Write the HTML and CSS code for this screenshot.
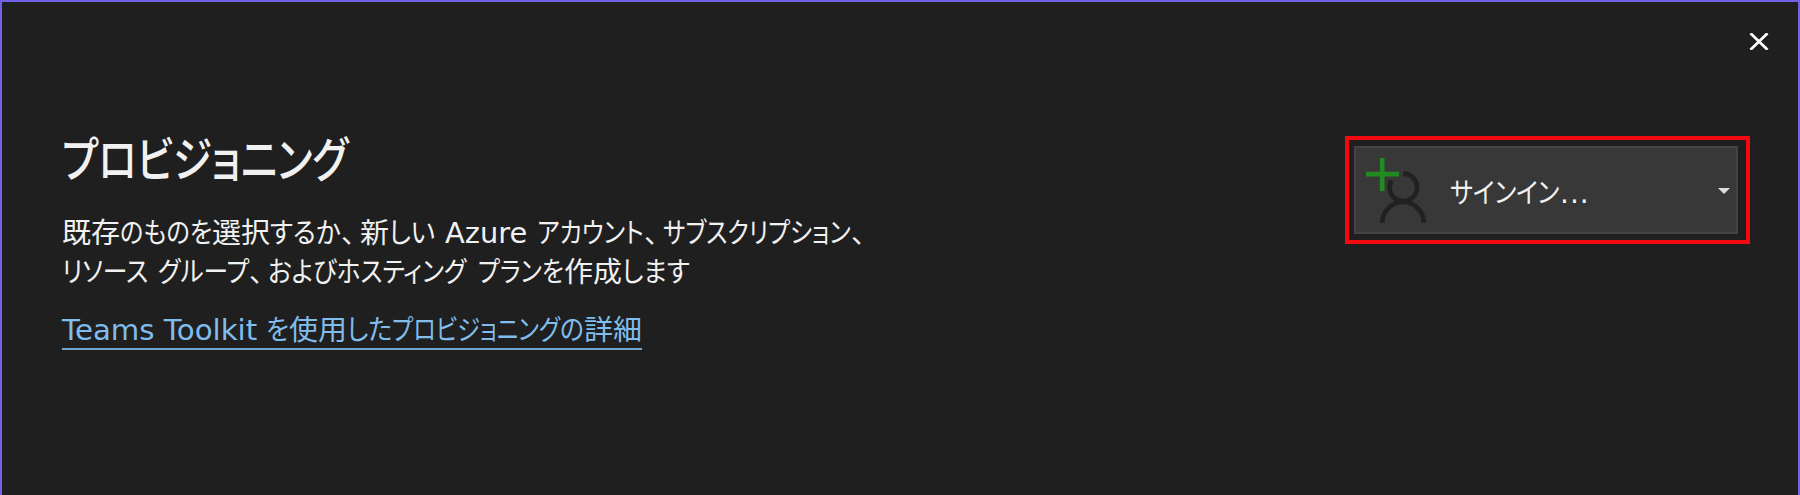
FILE: index.html
```
<!DOCTYPE html>
<html lang="ja">
<head>
<meta charset="utf-8">
<title>プロビジョニング</title>
<link rel="stylesheet" href="styles.css">
</head>
<body>
<main class="dialog">
  <section class="info">
    <h1 class="title line"><span class="run" style="width:286px"><span>プロビジョニング</span></span></h1>
    <div class="description">
      <p class="line"><span class="run" style="width:58px"><span>既存</span></span><span class="run" style="width:92px"><span>のものを</span></span><span class="run" style="width:58px"><span>選択</span></span><span class="run" style="width:71px"><span>するか</span></span><span class="comma">、</span><span class="run" style="width:29px"><span>新</span></span><span class="run" style="width:46px"><span>しい</span></span><span class="run latin gap-m" style="width:82px"><span>Azure</span></span><span class="run gap-m" style="width:107px"><span>アカウント</span></span><span class="comma">、</span><span class="run" style="width:188px"><span>サブスクリプション</span></span><span class="comma">、</span></p>
      <p class="line"><span class="run" style="width:86px"><span>リソース</span></span><span class="run gap-m" style="width:91px"><span>グループ</span></span><span class="comma">、</span><span class="run" style="width:198px"><span>およびホスティング</span></span><span class="run gap-l" style="width:86px"><span>プランを</span></span><span class="run" style="width:58px"><span>作成</span></span><span class="run" style="width:68px"><span>します</span></span></p>
    </div>
    <a class="link line" href="#"><span class="run latin" style="width:195px"><span>Teams Toolkit</span></span><span class="run gap-s" style="width:23px"><span>を</span></span><span class="run" style="width:58px"><span>使用</span></span><span class="run" style="width:45px"><span>した</span></span><span class="run" style="width:168px"><span>プロビジョニング</span></span><span class="run" style="width:24px"><span>の</span></span><span class="run" style="width:58px"><span>詳細</span></span></a>
  </section>
  <aside class="side">
    <button class="close" aria-label="閉じる"><svg width="20" height="17" viewBox="0 0 20 17"><path d="M1.5 .3 18.5 16.7M18.5 .3 1.5 16.7" stroke="#fff" stroke-width="2.8" fill="none"/></svg></button>
    <div class="highlight">
      <button class="signin">
        <svg class="user" width="60" height="66" viewBox="0 0 60 66">
          <path d="M37 15.7A13.7 13.7 0 1 1 25.5 22.5" fill="none" stroke="#212121" stroke-width="4.7"/>
          <path d="M16.3 64.7a20.7 20.7 0 0 1 41.4 0" fill="none" stroke="#212121" stroke-width="4.7"/>
          <path d="M16.2 0v33M0 16.2h33" stroke="#218a21" stroke-width="4.7" fill="none"/>
        </svg>
        <span class="label line"><span class="run" style="width:109px"><span>サインイン</span></span><span class="dots">...</span></span>
        <svg class="arrow" width="12" height="6" viewBox="0 0 12 6"><path d="M0 0h12L6 6z" fill="#dcdcdc"/></svg>
      </button>
    </div>
  </aside>
</main>
<script src="fit.js"></script>
</body>
</html>
```
FILE: styles.css
```
* { box-sizing: border-box; }
body { margin: 0; background: #1f1f1f; }
.dialog {
  height: 495px;
  display: flex;
  justify-content: space-between;
  border: 2px solid #7160e8;
  border-bottom: 0;
  background: #1f1f1f;
  color: #f1f1f1;
  font-family: "Noto Sans CJK JP", sans-serif;
  font-size: 28px;
  font-feature-settings: "palt";
}
.info { padding: 122px 0 0 60px; }
.line { display: flex; align-items: baseline; margin: 0; white-space: nowrap; }
.run, .comma { display: block; flex: none; }
.comma { font-feature-settings: normal; letter-spacing: -9px; }
.run > span { display: inline-block; transform-origin: 0 50%; }
.latin { font-family: "DejaVu Sans", sans-serif; font-size: 28.5px; }
.gap-s { margin-left: 9px; }
.gap-m { margin-left: 10px; }
.gap-l { margin-left: 12px; }
.title { font-size: 48px; font-weight: 500; line-height: 64px; }
.description { margin-top: 24px; line-height: 39px; }
.description .line { height: 39px; }
.link {
  width: max-content;
  height: 37px;
  margin-top: 23px;
  line-height: 30px;
  color: #80bdec;
  text-decoration: none;
  border-bottom: 2px solid #6fa5cf;
}
.side { display: flex; flex-direction: column; align-items: flex-end; padding: 31px 48px 0 0; }
button { padding: 0; border: 0; background: none; color: inherit; font: inherit; font-feature-settings: inherit; }
.close { display: flex; margin: 0 -19px 0 0; }
.highlight { margin-top: 86px; width: 405px; height: 108px; padding: 6px 5px; border: 4px solid #f3090f; }
.signin {
  display: flex;
  align-items: center;
  width: 384px;
  height: 88px;
  padding: 0 6px 0 10px;
  border: 2px solid #434343;
  background: #383838;
}
.user { margin-top: 2px; }
.label { margin: 4px 0 0 24px; line-height: 40px; }
.dots { margin-left: 1px; font-family: "DejaVu Sans", sans-serif; letter-spacing: 1px; }
.arrow { margin: 2px 0 0 auto; }
```
FILE: fit.js
```
// Condense each run of text horizontally to the width of its box.
document.querySelectorAll('.run').forEach(function (run) {
  var text = run.firstElementChild;
  text.style.transform = 'scaleX(' + run.clientWidth / text.offsetWidth + ')';
});
```
